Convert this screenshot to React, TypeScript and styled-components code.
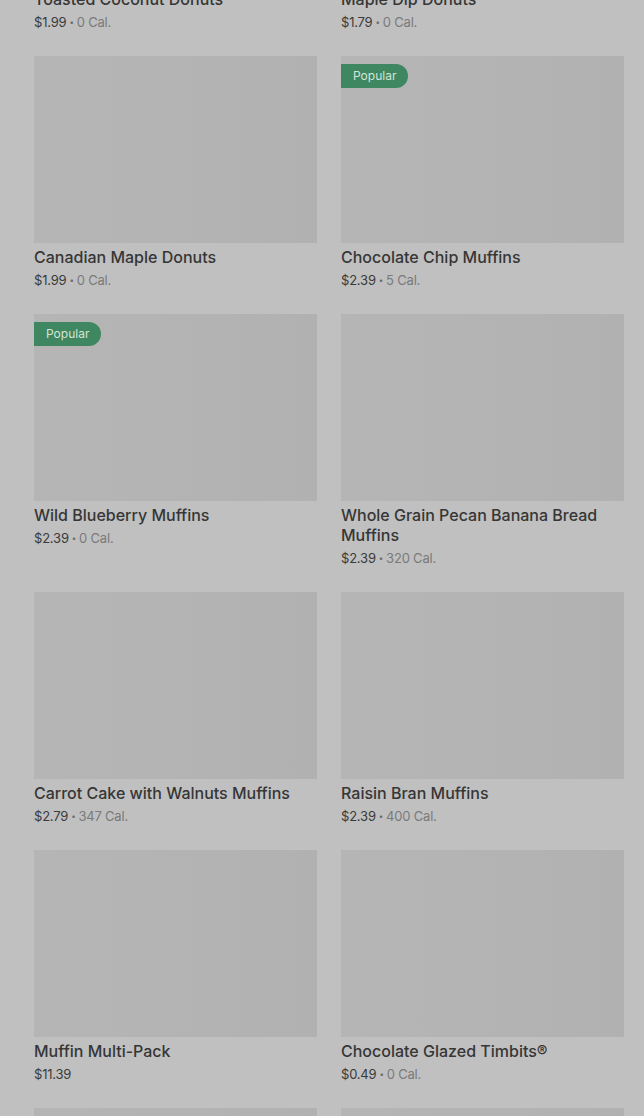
import styled, { createGlobalStyle } from 'styled-components';

interface MenuItem {
  name: string,
  price: string,
  calories?: string,
  popular?: boolean
}

const items: MenuItem[] = [
  {name: 'Toasted Coconut Donuts', price: '$1.99', calories: '0 Cal.'},
  {name: 'Maple Dip Donuts', price: '$1.79', calories: '0 Cal.'},
  {name: 'Canadian Maple Donuts', price: '$1.99', calories: '0 Cal.'},
  {name: 'Chocolate Chip Muffins', price: '$2.39', calories: '5 Cal.', popular: true},
  {name: 'Wild Blueberry Muffins', price: '$2.39', calories: '0 Cal.', popular: true},
  {name: 'Whole Grain Pecan Banana Bread Muffins', price: '$2.39', calories: '320 Cal.'},
  {name: 'Carrot Cake with Walnuts Muffins', price: '$2.79', calories: '347 Cal.'},
  {name: 'Raisin Bran Muffins', price: '$2.39', calories: '400 Cal.'},
  {name: 'Muffin Multi-Pack', price: '$11.39'},
  {name: 'Chocolate Glazed Timbits®', price: '$0.49', calories: '0 Cal.'},
  {name: 'Old Fashioned Plain Timbits®', price: '$0.49', calories: '0 Cal.'},
  {name: 'Honey Dip Timbits®', price: '$0.49', calories: '0 Cal.'},
]

export default function App() {
  return (
    <>
      <GlobalStyle />
      <Grid>
        {
          items.map((item, index) => {
            return (
              <Card key={index}>
                <Thumb>
                  {item.popular && <Badge>Popular</Badge>}
                </Thumb>
                <Name>{item.name}</Name>
                <Meta>
                  <Price>{item.price}</Price>
                  {item.calories && (
                    <>
                      <Dot>•</Dot>
                      <Calories>{item.calories}</Calories>
                    </>
                  )}
                </Meta>
              </Card>
            )
          })
        }
      </Grid>
    </>
  )
}

const GlobalStyle = createGlobalStyle`
  html, body {
    margin: 0;
    background: #c0c0c0;
    overflow: hidden;
  }
  body {
    font-family: Inter, "Noto Sans", sans-serif;
  }
`

const Grid = styled.div`
  display: grid;
  grid-template-columns: 283px 283px;
  column-gap: 24px;
  row-gap: 24px;
  padding: 0 20px 0 34px;
  margin-top: -202px;
`

const Card = styled.div`
  display: flex;
  flex-direction: column;
`

const Thumb = styled.div`
  position: relative;
  height: 187px;
  background: linear-gradient(90deg, #b5b5b5 0%, #b3b3b3 60%, #b1b1b1 100%);
`

const Badge = styled.span`
  position: absolute;
  top: 8px;
  left: 0;
  height: 24px;
  line-height: 24px;
  padding: 0 12px;
  border-radius: 0 12px 12px 0;
  background: #3f8760;
  color: #d3e4d9;
  font-size: 12px;
`

const Name = styled.div`
  margin-top: 4px;
  font-size: 16px;
  line-height: 20px;
  font-weight: 500;
  color: #363636;
`

const Meta = styled.div`
  margin-top: 3px;
  display: flex;
  align-items: center;
  font-size: 13px;
  line-height: 20px;
  letter-spacing: -0.2px;
`

const Price = styled.span`
  color: #3a3a3a;
`

const Dot = styled.span`
  color: #6c6c6c;
  font-size: 8px;
  margin: 0 3px;
`

const Calories = styled.span`
  color: #7a7a7a;
`
